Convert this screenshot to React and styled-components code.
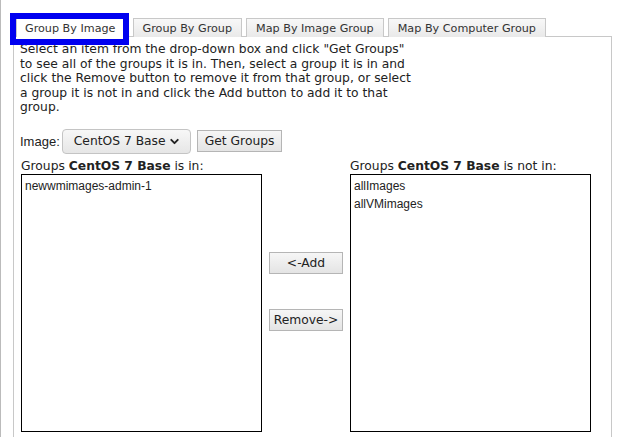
import React from 'react';
import styled, { createGlobalStyle } from 'styled-components';
import { ChevronDown } from 'lucide-react';

const GlobalStyle = createGlobalStyle`
  html, body {
    margin: 0;
    padding: 0;
    height: 437px;
    overflow: hidden;
    background: #fff;
  }
  body {
    font-family: "DejaVu Sans", sans-serif;
    font-size: 12px;
    color: #222;
  }
`;

const tabs = ['Group By Image', 'Group By Group', 'Map By Image Group', 'Map By Computer Group'];
const notIn = ['allImages', 'allVMimages'];
const isIn = ['newwmimages-admin-1'];

const App = () => (
  <Page>
    <GlobalStyle />
    <TabBar>
      {tabs.map((t, i) => (
        <Tab key={t} active={i === 0}>{t}</Tab>
      ))}
    </TabBar>
    <Panel>
      <Intro>
        Select an item from the drop-down box and click "Get Groups"<br />
        to see all of the groups it is in. Then, select a group it is in and<br />
        click the Remove button to remove it from that group, or select<br />
        a group it is not in and click the Add button to add it to that<br />
        group.
      </Intro>
      <PickRow>
        <Label arial>Image:</Label>
        <SelectBox>
          CentOS 7 Base
          <ChevronDown size={13} strokeWidth={3.5} />
        </SelectBox>
        <Button>Get Groups</Button>
      </PickRow>
      <Columns>
        <Column>
          <Label>Groups <b>CentOS 7 Base</b> is in:</Label>
          <ListBox>
            {isIn.map(g => <ListItem key={g}>{g}</ListItem>)}
          </ListBox>
        </Column>
        <Middle>
          <Button wide>&lt;-Add</Button>
          <Button wide>Remove-&gt;</Button>
        </Middle>
        <Column>
          <Label>Groups <b>CentOS 7 Base</b> is not in:</Label>
          <ListBox>
            {notIn.map(g => <ListItem key={g}>{g}</ListItem>)}
          </ListBox>
        </Column>
      </Columns>
    </Panel>
  </Page>
);

const Page = styled.div`
  border-left: 1px solid #bbb;
  padding: 18px 14px 0 12px;
  height: 437px;
  box-sizing: border-box;
`;

const TabBar = styled.ul`
  display: flex;
  gap: 4px;
  list-style: none;
  margin: 0 0 -1px;
  padding: 0 0 0 3px;
  position: relative;
  z-index: 1;
`;

const Tab = styled.li`
  position: relative;
  height: 19px;
  box-sizing: border-box;
  padding: 0 ${p => (p.active ? '8px' : '9px')};
  display: flex;
  align-items: center;
  font-size: 11.2px;
  color: #333;
  border: 1px solid #c8c8c8;
  border-bottom: none;
  background: ${p => (p.active ? '#fff' : 'linear-gradient(#f8f8f8, #e9e9e9)')};
  margin-right: ${p => (p.active ? '4px' : '0')};

  &::after {
    content: '';
    display: ${p => (p.active ? 'block' : 'none')};
    position: absolute;
    left: -7px;
    right: -5px;
    top: -6px;
    bottom: -8px;
    border: 6px solid #0000f0;
  }
`;

const Panel = styled.div`
  border: 1px solid #c8c8c8;
  padding: 5px 6px 20px;
  width: 599px;
  box-sizing: border-box;
`;

const Intro = styled.p`
  margin: 0 0 14px;
  font-size: 12.3px;
  line-height: 14.5px;
  white-space: nowrap;
`;

const PickRow = styled.div`
  display: flex;
  align-items: center;
  height: 25px;
  margin-bottom: 5px;
`;

const Label = styled.div`
  font-family: ${p => (p.arial ? '"Liberation Sans", Arial, sans-serif' : '"DejaVu Sans", sans-serif')};
  font-size: ${p => (p.arial ? '13px' : '12.3px')};
  line-height: 15px;
  color: #222;
  white-space: nowrap;
`;

const SelectBox = styled.div`
  height: 25px;
  box-sizing: border-box;
  width: 129px;
  margin: 0 6px 0 2px;
  padding: 0 9px 0 11px;
  display: flex;
  align-items: center;
  justify-content: space-between;
  border: 1px solid #c4c4c4;
  border-radius: 4px;
  background: linear-gradient(#f7f7f7, #e6e6e6);
  color: #222;
  font-size: 12.3px;
`;

const Button = styled.button`
  height: 22px;
  box-sizing: border-box;
  width: ${p => (p.wide ? '74px' : 'auto')};
  padding: 0 ${p => (p.wide ? '0' : '7px')};
  white-space: nowrap;
  font-family: "DejaVu Sans", sans-serif;
  font-size: 12.3px;
  color: #222;
  border: 1px solid #b5b5b5;
  border-radius: 0;
  background: linear-gradient(#f6f6f6, #e4e4e4);
`;

const Columns = styled.div`
  display: grid;
  grid-template-columns: 241px 88px 241px;
  margin-left: 1px;
`;

const Column = styled.div`
  display: flex;
  flex-direction: column;
`;

const Middle = styled.div`
  display: flex;
  flex-direction: column;
  align-items: center;
  gap: 35px;
  padding-top: 93px;
`;

const ListBox = styled.div`
  height: 258px;
  box-sizing: border-box;
  border: 1px solid #000;
  padding-top: 2px;
`;

const ListItem = styled.div`
  font-family: "Liberation Sans", Arial, sans-serif;
  font-size: 12px;
  height: 18px;
  line-height: 18px;
  padding-left: 3px;
  color: #222;
`;

export default App;
